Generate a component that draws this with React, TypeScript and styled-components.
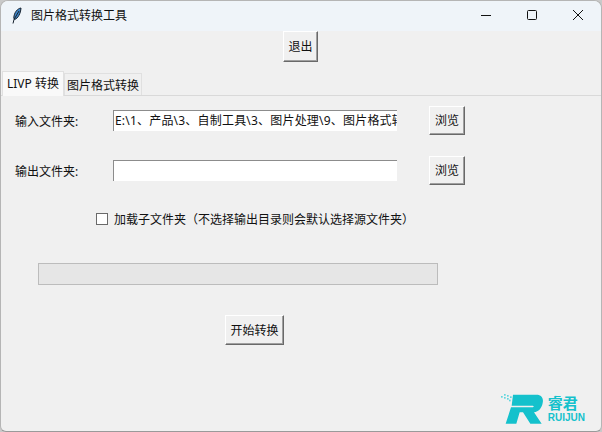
import styled, { createGlobalStyle } from "styled-components";

const GlobalStyle = createGlobalStyle`
  html, body {
    margin: 0;
    padding: 0;
    background: #c9c9c9;
  }
  body {
    font-family: "Noto Sans", "Noto Sans CJK SC", sans-serif;
    font-size: 12px;
    color: #111;
  }
`;

export default function App() {
  return (
    <>
      <GlobalStyle />
      <Win>
        <TitleBar>
          <Feather viewBox="0 0 10 17">
            <path d="M9 1 C5.5 1.5 2 5.5 1.8 11 L2.5 12.5 C6 11.5 8.6 6.5 9 1 Z" fill="#3f86c8" stroke="#16202c" strokeWidth="1" />
            <path d="M7 4 L2 12.5 L1 16.5" fill="none" stroke="#16202c" strokeWidth="1" />
          </Feather>
          <Title>图片格式转换工具</Title>
          <WinControls>
            <WinButton>
              <svg width="10" height="10" viewBox="0 0 10 10">
                <path d="M0 5.5 H10" stroke="#111" strokeWidth="1" />
              </svg>
            </WinButton>
            <WinButton>
              <svg width="10" height="10" viewBox="0 0 10 10">
                <rect x="0.5" y="0.5" width="9" height="9" rx="1" fill="none" stroke="#111" />
              </svg>
            </WinButton>
            <WinButton>
              <svg width="10" height="10" viewBox="0 0 10 10">
                <path d="M0 0 L10 10 M10 0 L0 10" stroke="#111" strokeWidth="1" />
              </svg>
            </WinButton>
          </WinControls>
        </TitleBar>
        <Content>
          <TopBar>
            <RaisedButton $w={35} $h={31}>退出</RaisedButton>
          </TopBar>
          <Tabs>
            <Tab $active>LIVP 转换</Tab>
            <Tab>图片格式转换</Tab>
          </Tabs>
          <Panel>
            <FolderRow>
              <FieldLabel>输入文件夹:</FieldLabel>
              <PathInput>E:\1、产品\3、自制工具\3、图片处理\9、图片格式转</PathInput>
              <RaisedButton $w={36} $h={29}>浏览</RaisedButton>
            </FolderRow>
            <FolderRow>
              <FieldLabel>输出文件夹:</FieldLabel>
              <PathInput />
              <RaisedButton $w={36} $h={29}>浏览</RaisedButton>
            </FolderRow>
            <CheckRow>
              <CheckBox />
              <span>加载子文件夹（不选择输出目录则会默认选择源文件夹）</span>
            </CheckRow>
            <Progress />
            <StartRow>
              <RaisedButton $w={59} $h={30}>开始转换</RaisedButton>
            </StartRow>
            <LogoRow>
              <Logo>
                <LogoMark viewBox="0 0 150 120">
                  <path d="M48 26 H118 C135 26 140 38 137 51 C134 67 125 77 111 79 L134 113 H100 L78 79 H68 L58 113 H26 L42 64 H106 C111 64 112 59 106 59 H44 Z" fill="#14c1cc" />
                  <g fill="#5fd6de">
                    <rect x="12" y="30" width="5" height="5" />
                    <rect x="21" y="24" width="5" height="5" />
                    <rect x="21" y="33" width="5" height="5" />
                    <rect x="30" y="27" width="5" height="5" />
                    <rect x="30" y="36" width="5" height="5" />
                    <rect x="39" y="31" width="5" height="5" />
                    <rect x="36" y="41" width="5" height="5" />
                  </g>
                </LogoMark>
                <LogoText>
                  <LogoCn>睿君</LogoCn>
                  <LogoEn>RUIJUN</LogoEn>
                </LogoText>
              </Logo>
            </LogoRow>
          </Panel>
        </Content>
      </Win>
    </>
  );
}

const Win = styled.div`
  width: 602px;
  height: 432px;
  display: flex;
  flex-direction: column;
  overflow: hidden;
  box-sizing: border-box;
  border: 1px solid #b5b5b5;
  border-bottom-color: #9a9a9a;
  border-radius: 8px 8px 6px 6px;
  background: #f0f0f0;
`;
const TitleBar = styled.div`
  box-sizing: border-box;
  height: 30px;
  flex: none;
  display: flex;
  align-items: center;
  padding: 0 0 2px 11px;
  background: #eff4f9;
`;
const Feather = styled.svg`
  width: 10px;
  height: 17px;
`;
const Title = styled.span`
  margin-left: 9px;
  font-size: 12px;
`;
const WinControls = styled.div`
  margin-left: auto;
  display: flex;
`;
const WinButton = styled.div`
  width: 46px;
  height: 28px;
  display: flex;
  align-items: center;
  justify-content: center;
`;
const Content = styled.div`
  flex: 1;
  display: flex;
  flex-direction: column;
  min-height: 0;
`;
const TopBar = styled.div`
  height: 41px;
  flex: none;
  display: flex;
  justify-content: center;
  padding-right: 1px;
`;
const RaisedButton = styled.div<{ $w: number; $h: number }>`
  box-sizing: border-box;
  width: ${(p) => p.$w}px;
  height: ${(p) => p.$h}px;
  flex: none;
  display: flex;
  align-items: center;
  justify-content: center;
  padding-bottom: 1px;
  background: #f0f0f0;
  border: 1px solid;
  border-color: #fff #696969 #696969 #fff;
  box-shadow: inset -1px -1px 0 #a0a0a0;
  font-size: 12px;
`;
const Tabs = styled.div`
  box-sizing: border-box;
  height: 24px;
  flex: none;
  display: flex;
  align-items: flex-end;
  padding-left: 1px;
  border-bottom: 1px solid #d9d9d9;
`;
const Tab = styled.div<{ $active?: boolean }>`
  box-sizing: border-box;
  height: ${(p) => (p.$active ? 25 : 22)}px;
  margin-bottom: ${(p) => (p.$active ? -1 : 0)}px;
  padding: ${(p) => (p.$active ? "0 4px 3px 4px" : "1px 2px 0 2px")};
  display: flex;
  align-items: center;
  background: ${(p) => (p.$active ? "#f9f9f9" : "#f0f0f0")};
  border: 1px solid #e0e0e0;
  border-bottom: none;
  font-size: 12px;
`;
const Panel = styled.div`
  flex: 1;
  display: flex;
  flex-direction: column;
  padding: 10px 0 0 14px;
  min-height: 0;
`;
const FolderRow = styled.div`
  height: 29px;
  flex: none;
  display: flex;
  align-items: center;
  margin-bottom: 21px;
`;
const FieldLabel = styled.span`
  width: 98px;
  flex: none;
`;
const PathInput = styled.div`
  box-sizing: border-box;
  width: 284px;
  height: 21px;
  flex: none;
  margin-right: 32px;
  padding-left: 1px;
  background: #fff;
  border-top: 1px solid #8c8c8c;
  border-left: 1px solid #8c8c8c;
  line-height: 20px;
  letter-spacing: 0.2px;
  white-space: nowrap;
  overflow: hidden;
`;
const CheckRow = styled.div`
  display: flex;
  align-items: center;
  height: 18px;
  margin-left: 81px;
  margin-top: 4px;
`;
const CheckBox = styled.div`
  box-sizing: border-box;
  width: 12px;
  height: 12px;
  margin-right: 6px;
  background: #fff;
  border: 1px solid #6a6a6a;
`;
const Progress = styled.div`
  box-sizing: border-box;
  width: 400px;
  height: 22px;
  margin: 35px 0 0 23px;
  background: #e6e6e6;
  border: 1px solid #bcbcbc;
`;
const StartRow = styled.div`
  display: flex;
  margin: 30px 0 0 210px;
`;
const LogoRow = styled.div`
  display: flex;
  justify-content: flex-end;
  margin-top: auto;
  padding: 0 16px 5px 0;
`;
const Logo = styled.div`
  display: flex;
  align-items: flex-end;
`;
const LogoMark = styled.svg`
  width: 50px;
  height: 40px;
`;
const LogoText = styled.div`
  display: flex;
  flex-direction: column;
  margin: 0 0 3px 1px;
  color: #14c1cc;
  font-weight: 700;
  font-family: "Liberation Sans", "Noto Sans CJK SC", sans-serif;
`;
const LogoCn = styled.span`
  font-size: 15px;
  line-height: 18px;
`;
const LogoEn = styled.span`
  font-size: 10px;
  line-height: 10px;
`;
